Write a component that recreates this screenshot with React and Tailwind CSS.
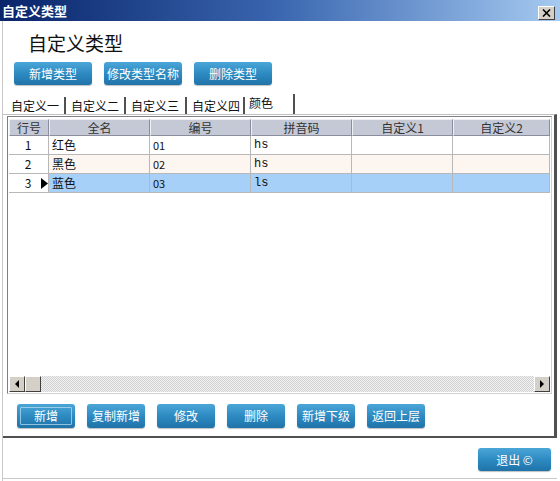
import React from 'react';

const font = { fontFamily: '"Noto Sans CJK SC", "Noto Sans", sans-serif' };

const topButtons = ['新增类型', '修改类型名称', '删除类型'];
const tabs = [
  { label: '自定义一', w: 'w-[60px]' },
  { label: '自定义二', w: 'w-[60px]' },
  { label: '自定义三', w: 'w-[61px]' },
  { label: '自定义四', w: 'w-[58px]' },
];
const columns = [
  { label: '行号', w: 'w-[40px]' },
  { label: '全名', w: 'w-[101px]' },
  { label: '编号', w: 'w-[101px]' },
  { label: '拼音码', w: 'w-[101px]' },
  { label: '自定义1', w: 'w-[101px]' },
  { label: '自定义2', w: 'w-[97px]' },
];
const rows = [
  { no: 1, name: '红色', code: '01', py: 'hs' },
  { no: 2, name: '黑色', code: '02', py: 'hs' },
  { no: 3, name: '蓝色', code: '03', py: 'ls', current: true },
];
const bottomButtons = ['新增', '复制新增', '修改', '删除', '新增下级', '返回上层'];

const BlueButton = ({ children, className = '', focused = false }) => (
  <button
    className={`relative flex items-center justify-center rounded-[3px] bg-gradient-to-b from-[#4ba6d8] via-[#2d8bc2] to-[#1f73a8] text-white text-[12px] leading-none shadow-[0_1px_1px_rgba(0,0,0,0.25)] ${className}`}
  >
    {focused && (
      <span className="absolute inset-[3px] border border-[#bfe0f2]/70 rounded-[1px]" />
    )}
    <span className="relative">{children}</span>
  </button>
);

const ArrowBtn = ({ dir }) => (
  <div className="w-[16px] h-[16px] bg-[#d4d0c8] border border-t-white border-l-white border-r-[#404040] border-b-[#404040] flex items-center justify-center">
    <svg width="6" height="8" viewBox="0 0 6 8">
      {dir === 'left' ? <path d="M5 0 L1 4 L5 8 Z" fill="#000" /> : <path d="M1 0 L5 4 L1 8 Z" fill="#000" />}
    </svg>
  </div>
);

export default function App() {
  return (
    <div className="w-[560px] h-[481px] bg-white flex flex-col overflow-hidden" style={font}>
      {/* title bar */}
      <div className="h-[21px] shrink-0 flex items-center justify-between pl-[2px] pr-[5px] bg-gradient-to-r from-[#0a246a] via-[#3b67b0] to-[#a6caf0]">
        <span className="text-white text-[13px] font-bold leading-none">自定义类型</span>
        <div className="w-[17px] h-[14px] mt-[4px] bg-[#d4d0c8] border border-t-white border-l-white border-r-[#404040] border-b-[#404040] flex items-center justify-center">
          <svg width="9" height="8" viewBox="0 0 9 8">
            <path d="M1 0.5 L8 7.5 M8 0.5 L1 7.5" stroke="#000" strokeWidth="1.6" />
          </svg>
        </div>
      </div>

      <div className="flex-1 flex flex-col border-l border-[#c8c8c8] ml-[2px] w-[555px]">
        {/* heading */}
        <div className="h-[41px] flex items-center pl-[25px] pt-[2px]">
          <span className="text-[19px] leading-none text-[#111]">自定义类型</span>
        </div>

        {/* top buttons */}
        <div className="flex gap-[12px] pl-[11px] h-[23px]">
          {topButtons.map((b) => (
            <BlueButton key={b} className="w-[78px] h-[23px]">{b}</BlueButton>
          ))}
        </div>

        {/* tabs */}
        <div className="flex items-end h-[29px] pl-[3px]">
          {tabs.map((t) => (
            <div
              key={t.label}
              className={`${t.w} h-[17px] border-r-2 border-[#505050] pl-[5px] text-[12px] leading-[17px] text-[#111]`}
            >
              {t.label}
            </div>
          ))}
          <div className="w-[50px] h-[20px] border-r-2 border-[#505050] pl-[4px] text-[12px] leading-[18px] text-[#111] bg-white">
            颜色
          </div>
        </div>

        {/* tab page */}
        <div className="w-[554px] h-[324px] border-t border-[#c0c0c0] border-r-[3px] border-r-[#505050] border-b-2 border-b-[#505050] flex flex-col">
          {/* grid */}
          <div className="ml-[4px] mt-[1px] w-[545px] h-[278px] border border-[#808080] border-r-[#d0d0d0] border-b-[#d0d0d0] flex flex-col pt-[2px] pl-px">
            <div className="flex h-[17px] shrink-0">
              {columns.map((c) => (
                <div
                  key={c.label}
                  className={`${c.w} h-[17px] bg-[#c5c9d6] border-t border-l border-t-[#eef0f5] border-l-[#eef0f5] border-r border-b border-r-[#8a8e9c] border-b-[#8a8e9c] flex items-center justify-center text-[12px] text-[#333] leading-none`}
                >
                  {c.label}
                </div>
              ))}
            </div>
            {rows.map((r, i) => {
              const bg = r.current ? 'bg-[#a6d0f8]' : i === 1 ? 'bg-[#fdf6f0]' : 'bg-white';
              return (
                <div key={r.no} className="flex h-[19px] shrink-0 text-[12px] text-[#111] leading-none">
                  <div className="w-[40px] h-[19px] bg-white border-r border-b border-[#b8b8b8] flex items-center relative">
                    <span className="w-[38px] text-center">{r.no}</span>
                    {r.current && (
                      <svg className="absolute left-[32px] top-[4px]" width="7" height="11" viewBox="0 0 7 11">
                        <path d="M0 0 L7 5.5 L0 11 Z" fill="#000" />
                      </svg>
                    )}
                  </div>
                  <div className={`w-[101px] h-[19px] ${bg} border-r border-b border-[#b8b8b8] flex items-center pl-[3px]`}>{r.name}</div>
                  <div className={`w-[101px] h-[19px] ${bg} border-r border-b border-[#b8b8b8] flex items-center pl-[3px] text-[11px]`}>{r.code}</div>
                  <div className={`w-[101px] h-[19px] ${bg} border-r border-b border-[#b8b8b8] flex items-center pl-[3px] text-[12px]`} style={{ fontFamily: '"Liberation Mono", monospace' }}>{r.py}</div>
                  <div className={`w-[101px] h-[19px] ${bg} border-r border-b border-[#b8b8b8]`} />
                  <div className={`w-[97px] h-[19px] ${bg} border-r border-b border-[#b8b8b8]`} />
                </div>
              );
            })}
            <div className="flex-1" />
            {/* scrollbar */}
            <div className="flex h-[16px] shrink-0 mb-[1px] w-[541px]">
              <ArrowBtn dir="left" />
              <div className="w-[16px] h-[16px] bg-[#d4d0c8] border border-t-white border-l-white border-r-[#404040] border-b-[#404040]" />
              <div className="flex-1 h-[16px] bg-[repeating-conic-gradient(#cfcfcf_0_25%,#f4f4f4_0_50%)] bg-[length:2px_2px]" />
              <ArrowBtn dir="right" />
            </div>
          </div>

          {/* bottom buttons */}
          <div className="flex gap-[12px] pl-[14px] mt-[10px]">
            {bottomButtons.map((b, i) => (
              <BlueButton key={b} focused={i === 0} className="w-[58px] h-[24px]">{b}</BlueButton>
            ))}
          </div>
        </div>

        {/* footer */}
        <div className="flex-1 flex justify-end items-start pt-[10px] pr-[6px] border-b border-[#c8c8c8] mb-[2px] w-[554px]">
          <BlueButton className="w-[73px] h-[23px]">退出 ©</BlueButton>
        </div>
      </div>
    </div>
  );
}
